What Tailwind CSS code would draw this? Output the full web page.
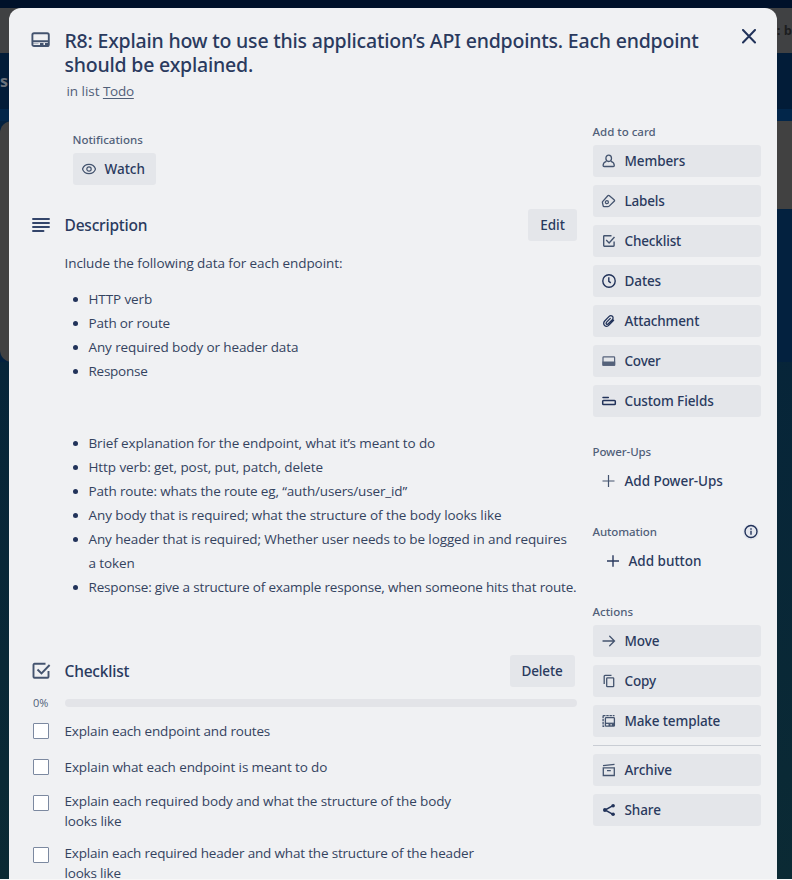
<!DOCTYPE html>
<html lang="en">
<head>
<meta charset="utf-8">
<title>Card</title>
<script src="https://cdn.jsdelivr.net/npm/@tailwindcss/browser@4"></script>
</head>
<body class="relative w-[792px] h-[880px] overflow-hidden bg-[#09263a] font-['Open_Sans','Noto_Sans',sans-serif] text-[#34435f]">

<!-- Dimmed board behind the dialog -->
<div class="absolute inset-0 flex flex-col bg-linear-to-b from-[#05213c] to-[#0b2a34]">
  <div class="h-2 bg-[#00112a]"></div>
  <div class="h-[45px] bg-[#404143] flex items-center justify-end text-[13px] font-bold text-[#1c1d20]"><span>: b</span></div>
  <div class="h-[56px] bg-[#021c38] flex items-center text-[16px] font-bold text-[#6b727b]"><span>s</span></div>
  <div class="h-3 bg-[#02264a]"></div>
  <div class="flex justify-between bg-[#03213f]">
    <div class="w-5 h-[241px] bg-[#414141] rounded-l-xl"></div>
    <div class="w-5 h-[88px] bg-[#414141]"></div>
  </div>
</div>

<!-- Card dialog -->
<main class="absolute left-[9px] top-2 w-[768px] h-[871px] overflow-hidden rounded-t-xl bg-[#f0f1f3]">
  <header class="flex h-[112px] pl-[22px] pt-[21px]">
    <svg class="mt-[2px] w-[20px] h-[18px] shrink-0 text-[#44546f]" viewBox="0 0 20 18" fill="none" stroke="currentColor" stroke-width="1.9"><rect x="1.4" y="2.200" width="16.4" height="12.800" rx="1.6"/><path d="M1.5 10.300h16.3"/><path d="M1.500 12.600h6" stroke-width="1" opacity=".4"/><path d="M9 13.200h3.500M14 13.200h3.500" stroke-width="2.600"/></svg>
    <div class="ml-[13.5px] w-[660px] font-['Noto_Sans']">
      <h1 class="text-[19.5px] leading-6 font-medium tracking-[-0.2px] text-[#2a3a5e] whitespace-nowrap">R8: Explain how to use this application’s API endpoints. Each endpoint<br>should be explained.</h1>
      <p class="mt-1 pl-[2px] text-[13.5px] leading-5 tracking-[-0.05px] text-[#505f79] font-['Open_Sans']">in list <a class="underline underline-offset-2 tracking-[-0.25px]">Todo</a></p>
    </div>
    <svg class="ml-[16.5px] w-4 h-4 text-[#22335a]" viewBox="0 0 16 16" fill="none" stroke="currentColor" stroke-width="2" stroke-linecap="round"><path d="M2 1l12 12.500M14 1L2 13.500"/></svg>
  </header>

  <div class="flex">
    <section class="w-[568px] pl-[22px] pt-3">
      <div class="pl-[42px] font-['Noto_Sans'] font-medium">
        <h2 class="-ml-[0.5px] text-[11.5px] leading-4 text-[#505f79]">Notifications</h2>
        <button class="mt-[5px] flex h-8 w-[83px] items-center rounded-[3px] bg-[#e4e6ea] pl-2 text-[13.5px] text-[#2a3a5e]">
          <svg class="w-4 h-4 mr-[7.5px] text-[#44546f]" viewBox="0 0 16 16" fill="none" stroke="currentColor" stroke-width="1.200"><path d="M1.500 8C2.500 5 5.200 3.300 8 3.300S13.500 5 14.500 8C13.500 11 10.800 12.700 8 12.700S2.500 11 1.500 8z"/><circle cx="8" cy="8" r="2.200"/></svg>Watch</button>
      </div>

      <div class="mt-6 flex h-8 items-center font-['Noto_Sans'] font-medium text-[#2a3a5e]">
        <svg class="w-5 h-5 text-[#33456a]" viewBox="0 0 20 20" fill="none" stroke="currentColor" stroke-width="1.900" stroke-linecap="round"><path d="M2 4h16M2 8h16M2 12h16M2 16h10.500"/></svg>
        <h2 class="ml-[13.5px] pt-[2px] flex-1 text-[15.5px] tracking-[-0.2px]">Description</h2>
        <button class="h-8 w-[49px] rounded-[3px] bg-[#e4e6ea] text-[13.5px]">Edit</button>
      </div>

      <div class="ml-[33.5px] mt-[10px] text-[13.5px] leading-6 tracking-[-0.11px] whitespace-nowrap">
        <p class="tracking-[-0.08px]">Include the following data for each endpoint:</p>
        <ul class="mt-3 list-disc pl-6 marker:text-[#22335a]">
          <li>HTTP verb</li>
          <li class="tracking-[-0.17px]">Path or route</li>
          <li>Any required body or header data</li>
          <li class="tracking-[-0.25px]">Response</li>
        </ul>
        <ul class="mt-12 list-disc pl-6 marker:text-[#22335a]">
          <li>Brief explanation for the endpoint, what it’s meant to do</li>
          <li class="tracking-[-0.08px]">Http verb: get, post, put, patch, delete</li>
          <li class="tracking-[-0.15px]">Path route: whats the route eg, “auth/users/user_id”</li>
          <li class="tracking-[-0.09px]">Any body that is required; what the structure of the body looks like</li>
          <li>Any header that is required; Whether user needs to be logged in and requires<br>a token</li>
          <li class="tracking-[-0.17px]">Response: give a structure of example response, when someone hits that route.</li>
        </ul>
      </div>

      <div class="mt-14 flex h-8 items-center pr-[2px] font-['Noto_Sans'] font-medium text-[#2a3a5e]">
        <svg class="w-5 h-5 text-[#44546f]" viewBox="0 0 20 20" fill="none" stroke="currentColor" stroke-width="1.900"><path d="M14.500 2.800H3.500a1 1 0 0 0-1 1v12a1 1 0 0 0 1 1h13a1 1 0 0 0 1-1V10"/><path d="M6.500 8.500l4 4L18.600 4"/></svg>
        <h2 class="ml-[13.5px] pt-[2px] flex-1 text-[15.5px] tracking-[-0.2px]">Checklist</h2>
        <button class="h-8 w-[65px] rounded-[3px] bg-[#e4e6ea] pr-[1px] text-[13.5px] tracking-[-0.15px]">Delete</button>
      </div>
      <div class="mt-2 flex h-4 items-center">
        <span class="w-[34px] pl-[2px] text-[11px] text-[#505f79]">0%</span>
        <div class="h-2 flex-1 rounded bg-[#e3e4e8]"></div>
      </div>
      <ul class="text-[13.5px] leading-5 tracking-[-0.14px] whitespace-nowrap">
        <li class="flex h-9 pt-3 pl-[2px]"><span class="size-4 shrink-0 border border-[#7c89a0] bg-white rounded-[1px]"></span><p class="-mt-[2px] ml-[15.5px] tracking-[-0.17px]">Explain each endpoint and routes</p></li>
        <li class="flex h-9 pt-3 pl-[2px]"><span class="size-4 shrink-0 border border-[#7c89a0] bg-white rounded-[1px]"></span><p class="-mt-[2px] ml-[15.5px] tracking-[-0.12px]">Explain what each endpoint is meant to do</p></li>
        <li class="flex h-[52px] pt-3 pl-[2px]"><span class="size-4 shrink-0 border border-[#7c89a0] bg-white rounded-[1px]"></span><p class="-mt-1 ml-[15.5px] tracking-[-0.13px]">Explain each required body and what the structure of the body<br>looks like</p></li>
        <li class="flex h-[52px] pt-3 pl-[2px]"><span class="size-4 shrink-0 border border-[#7c89a0] bg-white rounded-[1px]"></span><p class="-mt-1 ml-[15.5px] tracking-[-0.18px]">Explain each required header and what the structure of the header<br>looks like</p></li>
      </ul>
    </section>

    <aside class="ml-4 w-[168px] pt-1 font-['Noto_Sans'] font-medium text-[13.5px] text-[#2a3a5e]">
      <h3 class="-ml-[0.5px] text-[11.5px] leading-4 text-[#505f79]">Add to card</h3>
      <div class="mt-[5px] flex flex-col gap-2">
        <button class="flex h-8 items-center gap-[7.5px] rounded-[3px] bg-[#e4e6ea] pl-2"><svg class="size-4 text-[#44546f]" viewBox="0 0 16 16" fill="none" stroke="currentColor" stroke-width="1.300"><ellipse cx="7.700" cy="5.300" rx="2.800" ry="3.200"/><path d="M5.400 8.300C3.300 9 2.100 10.800 2.100 12.500c0 .6.400 1 1 1h9.200c.6 0 1-.4 1-1 0-1.700-1.200-3.500-3.300-4.200"/></svg><span class="tracking-[-0.1px]">Members</span></button>
        <button class="flex h-8 items-center gap-[7.5px] rounded-[3px] bg-[#e4e6ea] pl-2"><svg class="size-4 text-[#44546f]" viewBox="0 0 16 16" fill="none" stroke="currentColor" stroke-width="1.300" stroke-linejoin="round"><path d="M1.600 8.600L6.800 2.700q.6-.6 1.300-.2l5 4.200q.9.700.1 1.500l-5 4.900q-.5.500-1.200.5H3.200q-1 0-1.100-1L1.400 9.400q0-.5.200-.8z"/><circle cx="5.900" cy="9.200" r="1.500"/></svg><span class="tracking-[-0.2px]">Labels</span></button>
        <button class="flex h-8 items-center gap-[7.5px] rounded-[3px] bg-[#e4e6ea] pl-2"><svg class="size-4 text-[#44546f]" viewBox="0 0 16 16" fill="none" stroke="currentColor" stroke-width="1.400"><path d="M10.500 2.800H3.400a.7.700 0 0 0-.7.700v9a.7.700 0 0 0 .7.700h9a.7.700 0 0 0 .7-.7V8.500"/><path d="M5.200 7l2.900 2.900L13.500 4"/></svg><span class="tracking-[-0.15px]">Checklist</span></button>
        <button class="flex h-8 items-center gap-[7.5px] rounded-[3px] bg-[#e4e6ea] pl-2"><svg class="size-4 text-[#22335a]" viewBox="0 0 16 16" fill="none" stroke="currentColor" stroke-width="1.400"><circle cx="8" cy="8" r="6.200"/><path d="M7.800 4.300v4l2 1.600"/></svg><span class="tracking-[-0.1px]">Dates</span></button>
        <button class="flex h-8 items-center gap-[7.5px] rounded-[3px] bg-[#e4e6ea] pl-2"><svg class="size-4 text-[#22335a]" viewBox="0 0 16 16" fill="none" stroke="currentColor" stroke-width="1.300" stroke-linecap="round"><path d="M12.600 7.200L8.200 11.900c-1.300 1.400-3.300 1.700-4.600.6-1.300-1.200-1.200-3.100.1-4.500l4.200-4.400c1-1 2.500-1.200 3.500-.3s.8 2.400-.1 3.400l-4 4.100c-.6.600-1.400.7-1.900.2s-.4-1.300.2-1.900L9.300 5.400"/></svg><span class="tracking-[-0.15px]">Attachment</span></button>
        <button class="flex h-8 items-center gap-[7.5px] rounded-[3px] bg-[#e4e6ea] pl-2"><svg class="size-4 text-[#55627b]" viewBox="0 0 16 16" fill="none" stroke="currentColor" stroke-width="1.200"><rect x="2" y="3.800" width="11.600" height="8.400" rx=".7"/><path d="M2 9h11.600v3.200H2z" fill="currentColor"/></svg><span class="tracking-[-0.2px]">Cover</span></button>
        <button class="flex h-8 items-center gap-[7.5px] rounded-[3px] bg-[#e4e6ea] pl-2"><svg class="size-4 text-[#22335a]" viewBox="0 0 16 16" fill="none" stroke="currentColor" stroke-width="1.500" stroke-linecap="round"><path d="M2 4.500h5.300"/><rect x="1.700" y="7.500" width="12.600" height="4" rx=".8"/></svg><span class="tracking-[-0.1px]">Custom Fields</span></button>
      </div>

      <h3 class="-ml-[0.5px] mt-[27px] text-[11.5px] leading-4 tracking-[-0.1px] text-[#505f79]">Power-Ups</h3>
      <button class="mt-[5px] flex h-8 items-center gap-[7.5px] pl-2"><svg class="size-4 text-[#44546f]" viewBox="0 0 16 16" fill="none" stroke="currentColor" stroke-width="1.200"><path d="M7.500 2v12M1.500 8h12"/></svg><span class="tracking-[-0.04px]">Add Power-Ups</span></button>

      <div class="mt-[27px] flex h-4 items-center justify-between"><h3 class="-ml-[0.5px] text-[11.5px] leading-4 tracking-[-0.1px] text-[#505f79]">Automation</h3>
        <svg class="mr-[2px] size-4 rounded-full bg-[#e4e7ee] text-[#22335a]" viewBox="0 0 16 16" fill="none" stroke="currentColor" stroke-width="1.400"><circle cx="8" cy="7.500" r="6"/><path d="M8 6.700v4M8 4.200v1.500"/></svg></div>
      <button class="mt-[5px] flex h-8 items-center gap-[7.5px] pl-3"><svg class="size-4" viewBox="0 0 16 16" fill="none" stroke="currentColor" stroke-width="1.400"><path d="M8 2.200v11.600M2 8h12"/></svg><span>Add button</span></button>

      <h3 class="-ml-[0.5px] mt-[27px] text-[11.5px] leading-4 text-[#505f79]">Actions</h3>
      <div class="mt-[5px] flex flex-col gap-2">
        <button class="flex h-8 items-center gap-[7.5px] rounded-[3px] bg-[#e4e6ea] pl-2"><svg class="size-4 text-[#44546f]" viewBox="0 0 16 16" fill="none" stroke="currentColor" stroke-width="1.300" stroke-linecap="round"><path d="M2 8h11.500M8.700 3.200L13.500 8l-4.800 4.800"/></svg><span class="tracking-[-0.1px]">Move</span></button>
        <button class="flex h-8 items-center gap-[7.5px] rounded-[3px] bg-[#e4e6ea] pl-2"><svg class="size-4 text-[#44546f]" viewBox="0 0 16 16" fill="none" stroke="currentColor" stroke-width="1.300"><path d="M3.200 11V3.200a.8.800 0 0 1 .8-.8h6.500"/><rect x="5.700" y="4.800" width="7" height="8.800" rx=".7"/></svg><span class="tracking-[-0.15px]">Copy</span></button>
        <button class="flex h-8 items-center gap-[7.5px] rounded-[3px] bg-[#e4e6ea] pl-2"><svg class="size-4 text-[#44546f]" viewBox="0 0 16 16" fill="none" stroke="currentColor" stroke-width="1.300"><rect x="4.400" y="4.600" width="9" height="8.600" rx=".8"/><path d="M4.400 10.300h9"/><path d="M7.500 11.900h2M10.700 11.900h2.600" stroke-width="2"/><path d="M2.100 2.600h11.400M2.100 2.600v10.800h2" stroke-dasharray="2.400 .8"/></svg><span class="tracking-[-0.12px]">Make template</span></button>
      </div>
      <div class="my-2 h-px bg-[#c9cdd4]"></div>
      <div class="flex flex-col gap-2">
        <button class="flex h-8 items-center gap-[7.5px] rounded-[3px] bg-[#e4e6ea] pl-2"><svg class="size-4 text-[#44546f]" viewBox="0 0 16 16" fill="none" stroke="currentColor" stroke-width="1.300"><path d="M2 3.600l11.500-1.300M2.300 5.800h11v7.700h-11zM6 8.600h3.800"/></svg><span class="tracking-[-0.05px]">Archive</span></button>
        <button class="flex h-8 items-center gap-[7.5px] rounded-[3px] bg-[#e4e6ea] pl-2"><svg class="size-4 text-[#22335a]" viewBox="0 0 16 16" fill="none" stroke="currentColor" stroke-width="1.500"><path d="M12 3.700L4 8l8 4.300"/><g fill="currentColor" stroke="none"><circle cx="3.900" cy="8" r="1.900"/><circle cx="12.100" cy="3.700" r="1.800"/><circle cx="12.100" cy="12.300" r="1.800"/></g></svg><span class="tracking-[-0.1px]">Share</span></button>
      </div>
    </aside>
  </div>
</main>
<div class="absolute left-0 bottom-0 h-px w-full bg-[#f7f7f7]"></div>
</body>
</html>
